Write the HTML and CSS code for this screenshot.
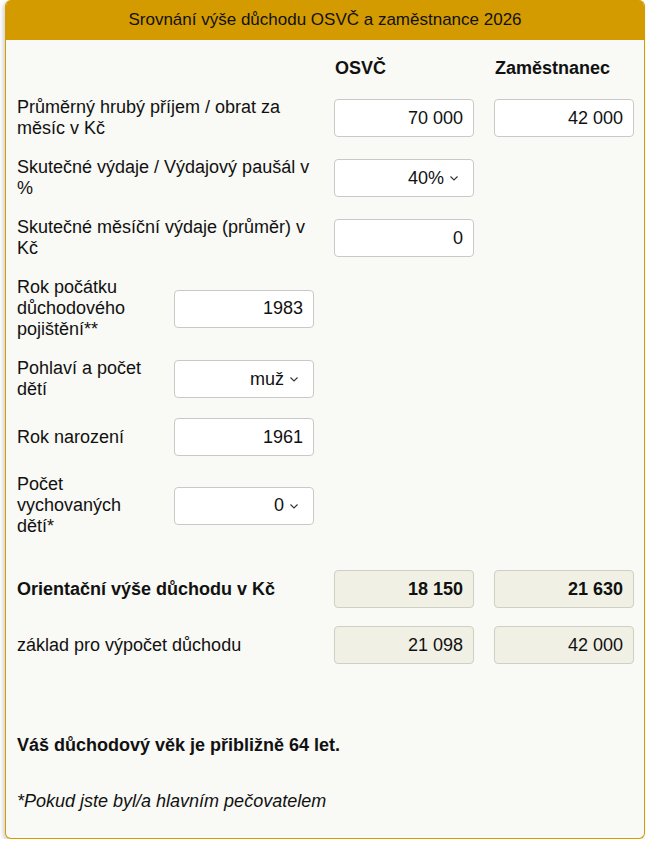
FILE: index.html
```html
<!DOCTYPE html>
<html lang="cs">
<head>
<meta charset="utf-8">
<title>Srovnání výše důchodu</title>
<link rel="stylesheet" href="styles.css">
</head>
<body>
<div class="calc">
  <div class="calc-head">Srovnání výše důchodu OSVČ a zaměstnance 2026</div>
  <div class="calc-body">
    <div class="grid">
      <div class="colhead c3">OSVČ</div>
      <div class="colhead c4">Zaměstnanec</div>

      <div class="label span2">Průměrný hrubý příjem / obrat za měsíc v Kč</div>
      <input class="field c3" type="text" value="70 000">
      <input class="field c4" type="text" value="42 000">

      <div class="label span2">Skutečné výdaje / Výdajový paušál v %</div>
      <div class="field select c3"><span>40%</span><svg class="chev" width="8" height="5" viewBox="0 0 8 5"><path d="M0.5 0.5 L4 4 L7.5 0.5" fill="none" stroke="#333" stroke-width="1.1"/></svg></div>

      <div class="label span2">Skutečné měsíční výdaje (průměr) v Kč</div>
      <input class="field c3" type="text" value="0">

      <div class="label c1">Rok počátku důchodového pojištění**</div>
      <input class="field c2" type="text" value="1983">

      <div class="label c1">Pohlaví a počet dětí</div>
      <div class="field select c2"><span>muž</span><svg class="chev" width="8" height="5" viewBox="0 0 8 5"><path d="M0.5 0.5 L4 4 L7.5 0.5" fill="none" stroke="#333" stroke-width="1.1"/></svg></div>

      <div class="label c1">Rok narození</div>
      <input class="field c2" type="text" value="1961">

      <div class="label c1">Počet vychovaných dětí*</div>
      <div class="field select c2"><span>0</span><svg class="chev" width="8" height="5" viewBox="0 0 8 5"><path d="M0.5 0.5 L4 4 L7.5 0.5" fill="none" stroke="#333" stroke-width="1.1"/></svg></div>

      <div class="label span2 strong first-result">Orientační výše důchodu v Kč</div>
      <div class="result strong c3 first-result">18 150</div>
      <div class="result strong c4 first-result">21 630</div>

      <div class="label span2">základ pro výpočet důchodu</div>
      <div class="result c3">21 098</div>
      <div class="result c4">42 000</div>
    </div>
    <p class="age">Váš důchodový věk je přibližně 64 let.</p>
    <p class="note">*Pokud jste byl/a hlavním pečovatelem</p>
  </div>
</div>
</body>
</html>
```
FILE: styles.css
```css
html, body {
  margin: 0;
  padding: 0;
  background: #ffffff;
}

body {
  font-family: "Liberation Sans", Arial, sans-serif;
  color: #111111;
}

.calc {
  margin-left: 5px;
  width: 640px;
  height: 839px;
  box-sizing: border-box;
  border: 1px solid #d49b00;
  border-top: 0;
  border-radius: 6px;
  background: #f9f9f5;
  box-shadow: -2px 2px 4px rgba(0, 0, 0, 0.18);
  overflow: hidden;
}

.calc-head {
  height: 40px;
  background: #d49b00;
  display: flex;
  align-items: center;
  justify-content: center;
  font-size: 17px;
  color: #111111;
}

.calc-body {
  padding: 18px 0 0 8px;
}

.grid {
  display: grid;
  grid-template-columns: repeat(4, 140px);
  column-gap: 20px;
  row-gap: 18px;
  align-items: center;
}

.c1 { grid-column: 1; }
.c2 { grid-column: 2; }
.c3 { grid-column: 3; }
.c4 { grid-column: 4; }
.span2 { grid-column: 1 / span 2; }

.colhead {
  font-size: 18px;
  font-weight: bold;
  line-height: 21px;
  padding-left: 1px;
}

.label {
  font-size: 18px;
  line-height: 21px;
  padding-left: 3px;
}

.strong {
  font-weight: bold;
}

.field {
  height: 38px;
  box-sizing: border-box;
  border: 1px solid #c9c9c9;
  border-radius: 4px;
  background: #ffffff;
  font-family: "Liberation Sans", Arial, sans-serif;
  font-size: 18px;
  color: #111111;
  text-align: right;
  padding: 0 10px;
  margin: 0;
  width: 140px;
  outline: none;
}

.select {
  display: flex;
  align-items: center;
  justify-content: flex-end;
  gap: 6px;
  padding-right: 15px;
}

.chev {
  display: block;
  margin-top: 1px;
}

.result {
  height: 38px;
  box-sizing: border-box;
  border: 1px solid #cfcfc6;
  border-radius: 4px;
  background: #f0f0e5;
  font-size: 18px;
  display: flex;
  align-items: center;
  justify-content: flex-end;
  padding: 0 10px;
}

.first-result {
  margin-top: 15px;
}

.age {
  margin: 71px 0 0 0;
  padding-left: 3px;
  font-size: 18px;
  line-height: 21px;
  font-weight: bold;
}

.note {
  margin: 35px 0 0 0;
  padding-left: 3px;
  font-size: 18px;
  line-height: 21px;
  font-style: italic;
}
```
